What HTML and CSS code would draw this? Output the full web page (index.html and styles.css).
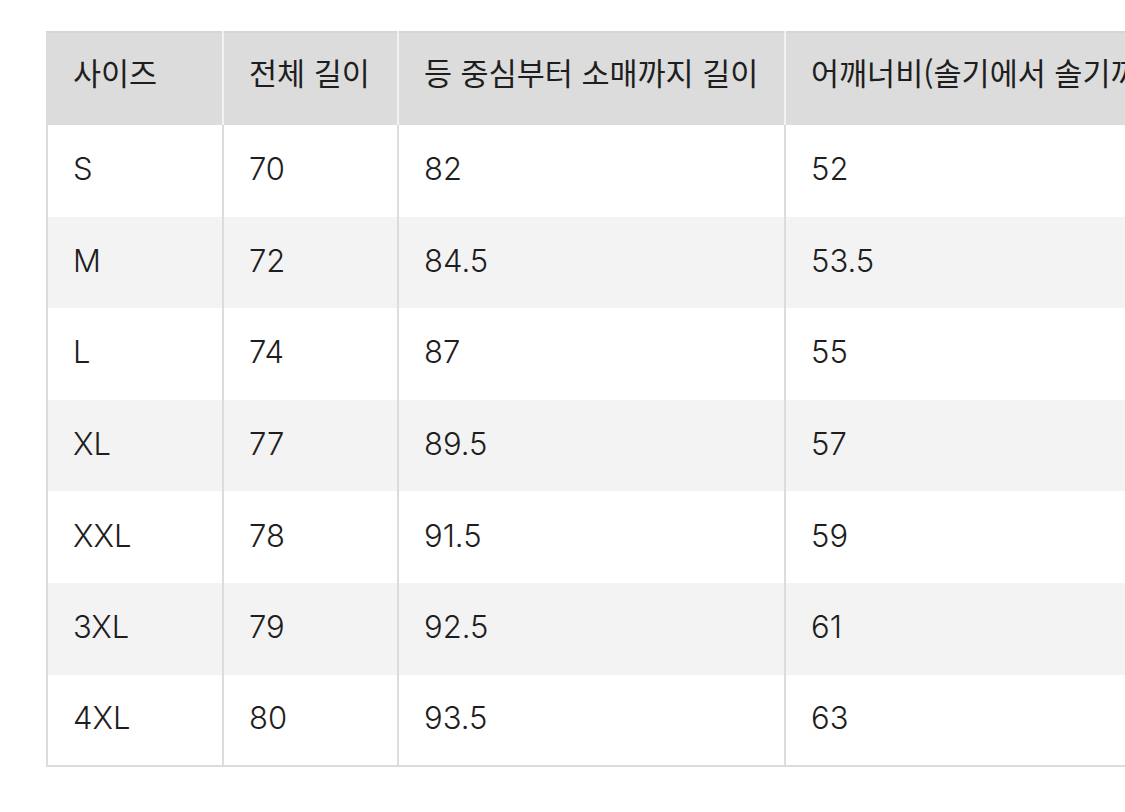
FILE: index.html
```html
<!DOCTYPE html>
<html lang="ko">
<head>
<meta charset="utf-8">
<title>사이즈표</title>
<link rel="stylesheet" href="styles.css">
</head>
<body>
<div class="wrap">
<table class="size-table">
  <colgroup>
    <col class="c1"><col class="c2"><col class="c3"><col class="c4">
  </colgroup>
  <thead>
    <tr><th>사이즈</th><th>전체 길이</th><th>등 중심부터 소매까지 길이</th><th>어깨너비(솔기에서 솔기까지)</th></tr>
  </thead>
  <tbody>
    <tr><td>S</td><td>70</td><td>82</td><td>52</td></tr>
    <tr><td>M</td><td>72</td><td>84.5</td><td>53.5</td></tr>
    <tr><td>L</td><td>74</td><td>87</td><td>55</td></tr>
    <tr><td>XL</td><td>77</td><td>89.5</td><td>57</td></tr>
    <tr><td>XXL</td><td>78</td><td>91.5</td><td>59</td></tr>
    <tr><td>3XL</td><td>79</td><td>92.5</td><td>61</td></tr>
    <tr><td>4XL</td><td>80</td><td>93.5</td><td>63</td></tr>
  </tbody>
</table>
</div>
</body>
</html>
```
FILE: styles.css
```css
html, body {
  margin: 0;
  padding: 0;
  background: #ffffff;
  overflow: hidden;
}
.wrap {
  padding: 31px 0 0 46px;
  width: 1400px;
}
.size-table {
  border-collapse: collapse;
  table-layout: fixed;
  width: 1238px;
  font-family: "Inter", "Noto Sans CJK KR", sans-serif;
  font-size: 31px;
  color: #1e1e1e;
}
.c1 { width: 176px; }
.c2 { width: 175px; }
.c3 { width: 387px; }
.c4 { width: 500px; }
.size-table th,
.size-table td {
  border-left: 2px solid #dcdcdc;
  border-right: 2px solid #dcdcdc;
  border-top: none;
  border-bottom: none;
  text-align: left;
  padding: 0 0 0 25px;
  white-space: nowrap;
  font-weight: 300;
}
.size-table th {
  background: #dcdcdc;
  border-top: 2px solid #d6d6d6;
  border-left-color: #f2f2f2;
  border-right-color: #f2f2f2;
  height: 93px;
  vertical-align: top;
  padding-top: 19px;
  box-sizing: border-box;
  font-family: "Noto Sans CJK KR", sans-serif;
  font-size: 30.5px;
  font-weight: 400;
  line-height: 40px;
}
.size-table th:first-child {
  border-left-color: #dcdcdc;
}
.size-table td {
  height: 91.6px;
  box-sizing: border-box;
  vertical-align: middle;
  padding-bottom: 4px;
}
.size-table tbody tr:nth-child(even) td {
  background: #f3f3f3;
}
.size-table tbody tr:nth-child(odd) td {
  background: #ffffff;
}
.size-table tbody tr:last-child td {
  border-bottom: 2px solid #dcdcdc;
}
.size-table td:last-child,
.size-table th:last-child {
  border-right: none;
}
```
